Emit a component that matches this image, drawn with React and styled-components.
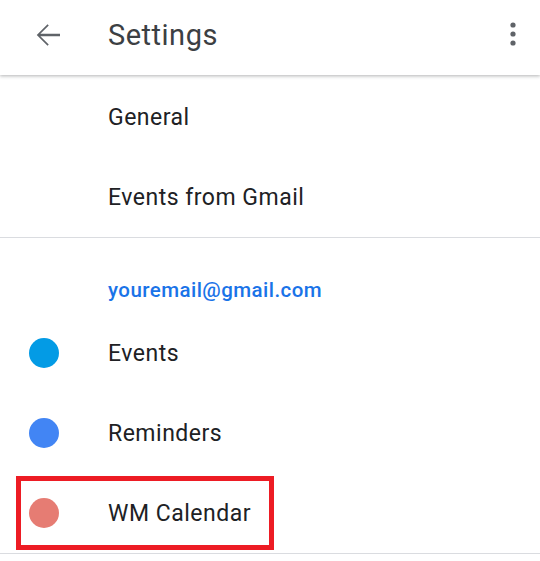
import styled, { createGlobalStyle } from "styled-components"

const GlobalStyle = createGlobalStyle`
	html, body {
		margin: 0;
		padding: 0;
		background: #ffffff;
		font-family: Roboto, "Liberation Sans", sans-serif;
	}
`

const Page = styled.div`
	width: 540px;
	height: 561px;
	overflow: hidden;
	background: #ffffff;
`

const Toolbar = styled.header`
	position: relative;
	z-index: 2;
	height: 75px;
	display: flex;
	align-items: center;
	padding: 0 15px 6px 30px;
	box-sizing: border-box;
	background: #ffffff;
	box-shadow: 0 1px 3px rgba(60, 64, 67, 0.3), 0 2px 4px rgba(60, 64, 67, 0.08);
`

const IconButton = styled.div`
	width: ${(p) => p.$size || 24}px;
	height: ${(p) => p.$size || 24}px;
	display: flex;
	align-items: center;
	justify-content: center;
	color: #5f6368;
	margin-bottom: ${(p) => p.$lift || 0}px;
`

const Title = styled.h1`
	flex: 1;
	margin: 0 0 0 42px;
	font-size: 29px;
	font-weight: 400;
	color: #3c4043;
	letter-spacing: 0.5px;
`

const Section = styled.section`
	padding-top: ${(p) => p.$top || 0}px;
	border-bottom: 1px solid #dadce0;
`

const Row = styled.div`
	position: relative;
	height: 80px;
	display: flex;
	align-items: center;
	padding-left: 29px;
`

const Dot = styled.span`
	width: 30px;
	height: 30px;
	border-radius: 50%;
	background: ${(p) => p.$color || "transparent"};
	flex-shrink: 0;
`

const Label = styled.span`
	margin-left: 49px;
	font-size: 23px;
	letter-spacing: 0.5px;
	color: #202124;
`

const Account = styled.div`
	padding: 40px 0 11px 108px;
	line-height: 24px;
	font-size: 20.5px;
	font-weight: 500;
	letter-spacing: 0.45px;
	color: #1a73e8;
`

const Highlight = styled.div`
	position: absolute;
	left: 16px;
	top: 3px;
	width: 258px;
	height: 74px;
	box-sizing: border-box;
	border: 5px solid #ed1c24;
	pointer-events: none;
`

const BackArrow = () => (
	<svg width="36" height="36" viewBox="0 0 24 24" fill="currentColor">
		<path d="M20 11.2H6.9l5.6-5.6L11.7 4.8 4.5 12l7.2 7.2.8-.8-5.6-5.6H20v-1.6z" />
	</svg>
)

const MoreIcon = () => (
	<svg width="24" height="24" viewBox="0 0 24 24" fill="currentColor">
		<circle cx="12" cy="3" r="2.6" />
		<circle cx="12" cy="12" r="2.6" />
		<circle cx="12" cy="21" r="2.6" />
	</svg>
)

const calendars = [
	{ name: "Events", color: "#039be5" },
	{ name: "Reminders", color: "#4285f4" },
	{ name: "WM Calendar", color: "#e67c73", marked: true },
]

const App = () => {
	return (
		<Page>
			<GlobalStyle />
			<Toolbar>
				<IconButton $size={36}>
					<BackArrow />
				</IconButton>
				<Title>Settings</Title>
				<IconButton $lift={2}>
					<MoreIcon />
				</IconButton>
			</Toolbar>
			<Section $top={2}>
				<Row>
					<Dot />
					<Label>General</Label>
				</Row>
				<Row>
					<Dot />
					<Label>Events from Gmail</Label>
				</Row>
			</Section>
			<Section>
				<Account>youremail@gmail.com</Account>
				{calendars.map((c) => (
					<Row key={c.name}>
						<Dot $color={c.color} />
						<Label>{c.name}</Label>
						{c.marked && <Highlight />}
					</Row>
				))}
			</Section>
		</Page>
	)
}

export default App
